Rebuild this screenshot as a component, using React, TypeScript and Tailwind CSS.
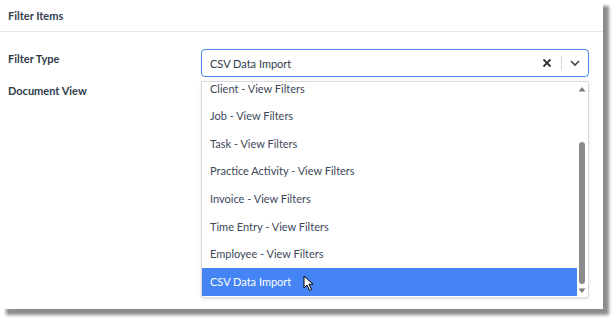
import React from 'react';

const items = [
  'Client - View Filters',
  'Job - View Filters',
  'Task - View Filters',
  'Practice Activity - View Filters',
  'Invoice - View Filters',
  'Time Entry - View Filters',
  'Employee - View Filters',
  'CSV Data Import',
];

const App: React.FC = () => {
  return (
    <div className="w-[616px] h-[322px] bg-white relative overflow-hidden" style={{ fontFamily: 'Lato, "Noto Sans", sans-serif' }}>
      {/* window with drop shadow */}
      <div className="w-[603px] h-[309px] bg-white shadow-[6px_6px_3px_rgba(0,0,0,0.45)]">
        <div className="h-[32px] border-b border-[#e6e6e6] flex items-center pl-[8px] pt-[2px] text-[11px] font-bold text-[#34404f]">
          Filter Items
        </div>

        <div className="flex pt-[17px]">
          <div className="w-[201px] pl-[8px] text-[11px] font-bold text-[#2f3b4b]">
            <div className="h-[20px] leading-[20px]">Filter Type</div>
            <div className="h-[20px] mt-[12px] leading-[20px]">Document View</div>
          </div>

          <div className="w-[388px] relative">
            {/* select */}
            <div className="h-[28px] border-[1.5px] border-[#4a86ee] rounded-[4px] flex items-center pl-[8px] text-[11px] text-[#2f3b4b]">
              <span className="flex-1 pt-[3px]">CSV Data Import</span>
              <svg width="10" height="10" viewBox="0 0 10 10" className="mr-[9px]">
                <path d="M1.5 1.5 L8.5 8.5 M8.5 1.5 L1.5 8.5" stroke="#333" strokeWidth="1.8" />
              </svg>
              <div className="w-px h-[14px] bg-[#d6d6d6]" />
              <svg width="12" height="8" viewBox="0 0 12 8" className="mx-[7px]">
                <path d="M2 2 L6 6 L10 2" stroke="#444" strokeWidth="1.6" fill="none" />
              </svg>
            </div>

            {/* dropdown menu */}
            <div className="mt-[4px] h-[217px] border border-[#dcdcdc] rounded-b-[3px] shadow-[0_1px_3px_rgba(0,0,0,0.12)] flex bg-white">
              <div className="flex-1 overflow-hidden">
                <div className="-mt-[7px]">
                  {items.map((t, i) => (
                    <div
                      key={t}
                      className={
                        i === items.length - 1
                          ? 'h-[27.6px] flex items-center pl-[8px] text-[11px] bg-[#4484f5] text-white relative'
                          : 'h-[27.6px] flex items-center pl-[8px] text-[11px] text-[#3c4859]'
                      }
                    >
                      {t}
                      {i === items.length - 1 && (
                        <svg width="12" height="17" viewBox="0 0 12 17" className="absolute left-[101px] top-[7px]">
                          <path d="M1 1 L1 13 L4 10 L6.5 15.5 L8.5 14.5 L6 9.2 L10 9.2 Z" fill="#fff" stroke="#000" strokeWidth="1" strokeLinejoin="round" />
                        </svg>
                      )}
                    </div>
                  ))}
                </div>
              </div>
              {/* scrollbar */}
              <div className="w-[10px] flex flex-col items-center mr-[1px]">
                <svg width="8" height="6" viewBox="0 0 8 6" className="mt-[4px]">
                  <path d="M0.5 5.5 L4 1 L7.5 5.5 Z" fill="#7a7a7a" />
                </svg>
                <div className="flex-1" />
                <div className="w-[6px] h-[142px] rounded-[3px] bg-[#8b8b8b]" />
                <svg width="8" height="6" viewBox="0 0 8 6" className="mt-[4px] mb-[3px]">
                  <path d="M0.5 0.5 L4 5 L7.5 0.5 Z" fill="#7a7a7a" />
                </svg>
              </div>
            </div>
          </div>
        </div>
      </div>
    </div>
  );
};

export default App;
